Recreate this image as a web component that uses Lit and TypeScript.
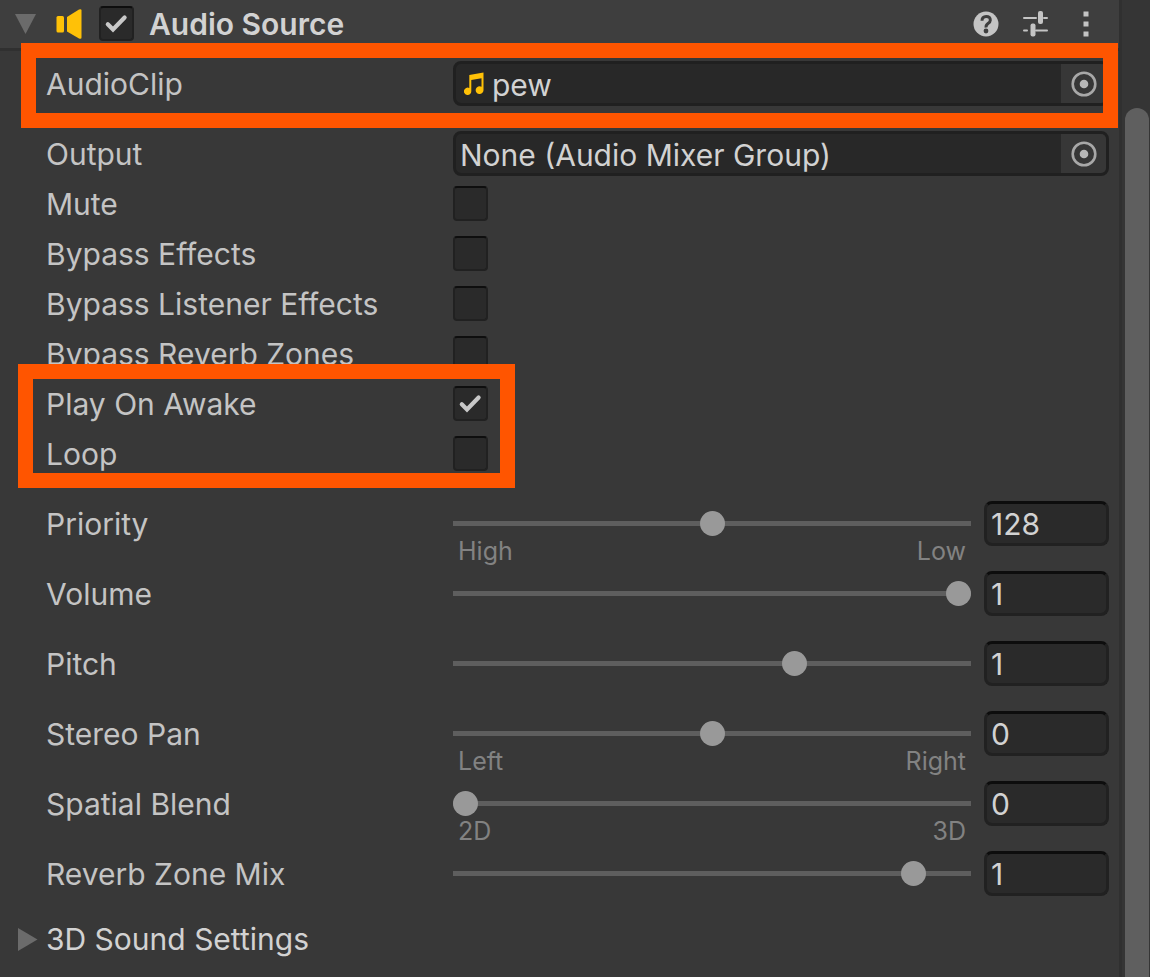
import { LitElement, html, css, svg } from "lit";
import { customElement } from "lit/decorators.js";

interface SliderField {
  id: string;
  label: string;
  min: number;
  max: number;
  value: number;
  low?: string;
  high?: string;
}

const SLIDERS: SliderField[] = [
  { id: "priority", label: "Priority", min: 0, max: 256, value: 128, low: "High", high: "Low" },
  { id: "volume", label: "Volume", min: 0, max: 1, value: 1 },
  { id: "pitch", label: "Pitch", min: -3, max: 3, value: 1 },
  { id: "pan", label: "Stereo Pan", min: -1, max: 1, value: 0, low: "Left", high: "Right" },
  { id: "blend", label: "Spatial Blend", min: 0, max: 1, value: 0, low: "2D", high: "3D" },
  { id: "reverb", label: "Reverb Zone Mix", min: 0, max: 1.1, value: 1 },
];

const noteIcon = svg`<svg class="note" width="20" height="24" viewBox="0 0 20 24" aria-hidden="true">
  <path fill="#ffc107" d="M5.3 3 19.5 0.6V18a3.9 3.9 0 1 1-2-3.3V6.3L7.3 8V19a3.7 3.7 0 1 1-2-3Z"/>
</svg>`;

const targetIcon = svg`<svg width="26" height="26" viewBox="0 0 26 26" aria-hidden="true">
  <circle cx="13" cy="13" r="11.3" fill="none" stroke="#a8a8a8" stroke-width="2.6"/>
  <circle cx="13" cy="13" r="4.3" fill="#b8b8b8"/>
</svg>`;

@customElement("app-root")
export class AppRoot extends LitElement {
  static styles = css`
    :host {
      display: flex;
      min-height: 100vh;
      background: #383838;
      color: #c4c4c4;
      font-family: Inter, "Liberation Sans", sans-serif;
      font-size: 30px;
      line-height: 36px;
    }
    * { box-sizing: border-box; }
    button, input { font: inherit; color: inherit; margin: 0; padding: 0; border: 0; background: none; }
    svg { display: block; flex: none; }

    .panel { flex: 1; min-width: 0; }
    .header {
      display: flex;
      align-items: center;
      height: 51px;
      padding: 0 20px 1px 15px;
      background: #3e3e3e;
      border-bottom: 3px solid #303030;
    }
    .speaker { margin: 0 17px 0 20px; }
    .title { margin: 0 auto 0 15px; font-size: 30px; font-weight: 600; line-height: 36px; color: #d2d2d2; }
    .tools { display: flex; align-items: center; gap: 24px; }

    .body { padding: 10px 10px 0 46px; }
    .row { display: grid; grid-template-columns: 407px minmax(0, 1fr); align-items: center; }
    .row.object { height: 45px; }
    .row.output { margin: 25px 0 2px; }
    .row.toggle { height: 50px; }
    .row.toggle label { padding-top: 2px; }
    .marked { position: relative; }
    .frame { position: absolute; border: 15px solid #ff5500; pointer-events: none; }
    .frame.clip { inset: -18px -9px -22px -25px; }
    .frame.play { inset: -14px auto -10px -28px; width: 497px; }

    .picker {
      display: flex;
      align-items: center;
      height: 45px;
      overflow: hidden;
      border: 3px solid #202020;
      border-radius: 8px;
      background: #282828;
      color: #d2d2d2;
    }
    .picker .note { margin-left: 8px; }
    .picker input { flex: 1; min-width: 0; height: 36px; padding: 2px 0 0 4px; }
    .picker .note + input { padding-left: 8px; }
    .picker button { display: grid; place-items: center; width: 45px; height: 39px; background: #373737; }

    .box {
      appearance: none;
      display: block;
      width: 35px;
      height: 35px;
      border: 2px solid #212121;
      border-top-color: #0e0e0e;
      border-radius: 4px;
      background: #2a2a2a center / 31px 31px no-repeat;
    }
    .box:checked {
      background-image: url("data:image/svg+xml,%3Csvg xmlns='http://www.w3.org/2000/svg' viewBox='0 0 31 31'%3E%3Cpath d='M6.8 16.200l5.200 5.300L23.600 9.500' fill='none' stroke='%23c8c8c8' stroke-width='4.200' stroke-linecap='round'/%3E%3C/svg%3E");
    }

    .sliders { padding-top: 23px; }
    .row.slider { grid-template-columns: 407px minmax(0, 1fr) 125px; align-items: start; height: 70px; }
    .row.slider label { line-height: 47px; }
    .control { padding: 10px 13px 0 0; }
    .range { appearance: none; display: block; width: 100%; height: 25px; }
    .range::-webkit-slider-runnable-track {
      height: 25px;
      background: linear-gradient(#5e5e5e, #5e5e5e) center / 100% 5px no-repeat;
    }
    .range::-webkit-slider-thumb { appearance: none; width: 25px; height: 25px; border-radius: 50%; background: #999; }
    .ends { display: flex; justify-content: space-between; padding: 0 5px; font-size: 25px; line-height: 30px; color: #828282; }
    .number {
      width: 125px;
      height: 45px;
      padding: 0 4px;
      border: 3px solid #212121;
      border-top-color: #0d0d0d;
      border-radius: 8px;
      background: #2a2a2a;
      color: #d2d2d2;
    }

    .foldout { display: flex; align-items: center; gap: 8px; height: 36px; margin-left: -28px; color: #d2d2d2; }

    .scroll { display: flex; flex: none; width: 31px; padding: 108px 1px 0 3px; border-left: 3px solid #303030; background: #353535; }
    .thumb { flex: 1; border-radius: 12px 12px 0 0; background: #5f5f5f; }
  `;

  private toggle(id: string, label: string, checked = false) {
    return html`<div class="row toggle">
      <label for=${id}>${label}</label>
      <input class="box" id=${id} type="checkbox" .checked=${checked} />
    </div>`;
  }

  private slider(f: SliderField) {
    return html`<div class="row slider">
      <label for=${f.id}>${f.label}</label>
      <div class="control">
        <input class="range" id=${f.id} type="range" min=${f.min} max=${f.max} step="any" .value=${String(f.value)} />
        ${f.low ? html`<div class="ends"><span>${f.low}</span><span>${f.high}</span></div>` : ""}
      </div>
      <input class="number" type="text" inputmode="decimal" aria-label=${f.label} .value=${String(f.value)} />
    </div>`;
  }

  render() {
    return html`
      <main class="panel">
        <header class="header">
          <button aria-label="Collapse">
            <svg width="21" height="20" viewBox="0 0 21 20"><path d="M0 0h21L10.500 20Z" fill="#6b6b6b"/></svg>
          </button>
          <svg class="speaker" width="26" height="30" viewBox="0 0 26 30" aria-hidden="true">
            <rect x="0.500" y="7" width="7.500" height="16.500" rx="1.500" fill="#ffc107"/>
            <path d="M11 8 23 .5Q25.500-.5 25.500 1.500v27q0 2-2.500 1L11 22.500Z" fill="#ffc107"/>
          </svg>
          <input class="box" id="enabled" type="checkbox" aria-label="Enabled" .checked=${true} />
          <h1 class="title">Audio Source</h1>
          <div class="tools">
            <button aria-label="Help">
              <svg width="26" height="26" viewBox="0 0 26 26">
                <circle cx="13" cy="13" r="12.500" fill="#c4c4c4"/>
                <path d="M9 9.800Q9 5.500 13.200 5.500T17.300 9.200Q17.300 11 15 12.600T13.100 16.500" fill="none" stroke="#3e3e3e" stroke-width="3"/>
                <circle cx="13" cy="20" r="2.400" fill="#3e3e3e"/>
              </svg>
            </button>
            <button aria-label="Presets">
              <svg width="26" height="26" viewBox="0 0 26 26" fill="#c4c4c4">
                <rect x="0" y="6" width="14" height="2" rx="1"/><rect x="15" y="0" width="5" height="13" rx="2"/>
                <rect x="20" y="6" width="5" height="2" rx="1"/><rect x="0" y="18.500" width="5" height="2" rx="1"/>
                <rect x="7.500" y="12.500" width="5" height="13" rx="2"/><rect x="12" y="18.500" width="13" height="2" rx="1"/>
              </svg>
            </button>
            <button aria-label="Options">
              <svg width="26" height="26" viewBox="0 0 26 26" fill="#c4c4c4">
                <rect x="10.500" y="0.500" width="5" height="5"/><rect x="10.500" y="10.500" width="5" height="5"/><rect x="10.500" y="20.500" width="5" height="5"/>
              </svg>
            </button>
          </div>
        </header>

        <div class="body">
          <div class="row object marked">
            <label for="clip">AudioClip</label>
            <div class="picker">
              ${noteIcon}
              <input id="clip" type="text" readonly value="pew" />
              <button aria-label="Select audio clip">${targetIcon}</button>
            </div>
            <div class="frame clip"></div>
          </div>
          <div class="row object output">
            <label for="output">Output</label>
            <div class="picker">
              <input id="output" type="text" readonly value="None (Audio Mixer Group)" />
              <button aria-label="Select output">${targetIcon}</button>
            </div>
          </div>

          ${this.toggle("mute", "Mute")}
          ${this.toggle("bypass-effects", "Bypass Effects")}
          ${this.toggle("bypass-listener", "Bypass Listener Effects")}
          ${this.toggle("bypass-reverb", "Bypass Reverb Zones")}
          <div class="marked">
            ${this.toggle("awake", "Play On Awake", true)}
            ${this.toggle("loop", "Loop")}
            <div class="frame play"></div>
          </div>

          <div class="sliders">${SLIDERS.map((f) => this.slider(f))}</div>

          <button class="foldout">
            <svg width="20" height="23" viewBox="0 0 20 23" aria-hidden="true"><path d="M0 0 19.500 11.500 0 23Z" fill="#6b6b6b"/></svg>
            <span>3D Sound Settings</span>
          </button>
        </div>
      </main>
      <div class="scroll"><div class="thumb"></div></div>
    `;
  }
}
